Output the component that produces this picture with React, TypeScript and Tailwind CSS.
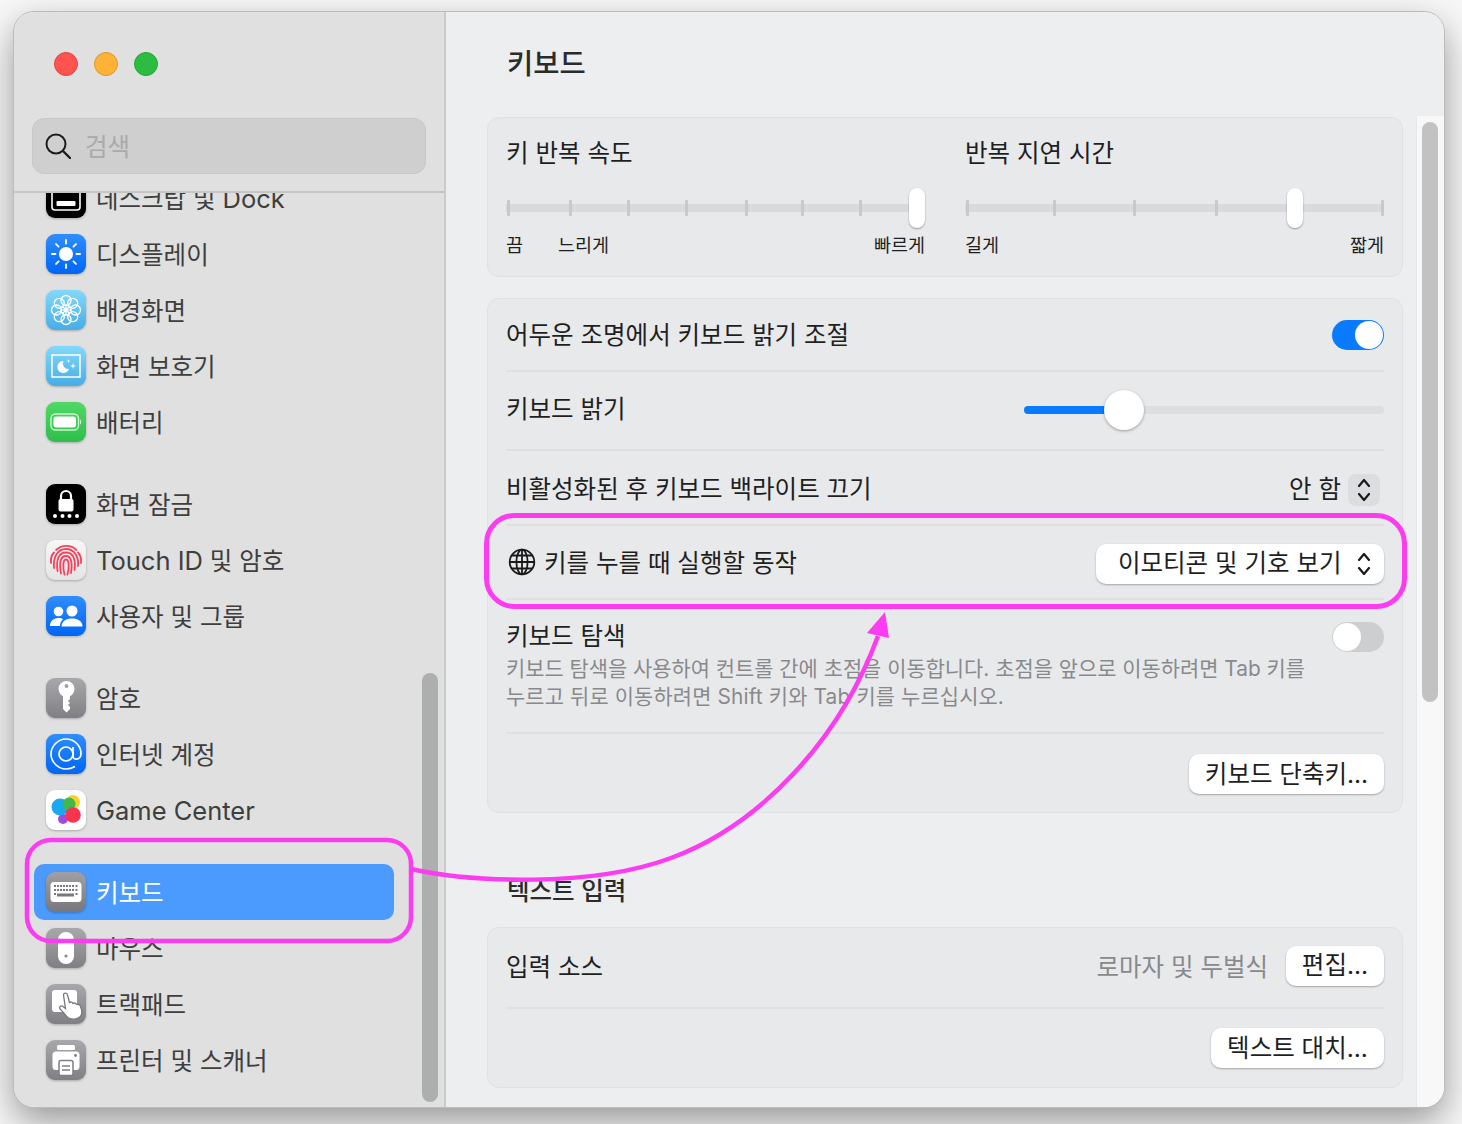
import React from "react";

const FONT = "font-['Inter','Noto_Sans_CJK_KR',sans-serif]";

function Tile({ id, from, to, children }: { id: string; from: string; to: string; children?: React.ReactNode }) {
  return (
    <svg width="40" height="40" viewBox="0 0 40 40" className="shrink-0 drop-shadow-[0_1px_1px_rgba(0,0,0,0.25)]">
      <defs>
        <linearGradient id={id} x1="0" y1="0" x2="0" y2="1">
          <stop offset="0" stopColor={from} />
          <stop offset="1" stopColor={to} />
        </linearGradient>
      </defs>
      <rect x="0" y="0" width="40" height="40" rx="9" fill={`url(#${id})`} />
      {children}
    </svg>
  );
}

const IconDock = () => (
  <Tile id="g-dock" from="#000" to="#000">
    <rect x="6" y="6" width="28" height="26" rx="3" fill="none" stroke="#fff" strokeWidth="1.6" />
    <rect x="10.5" y="23" width="19" height="5" rx="1" fill="#fff" />
  </Tile>
);

const IconDisplay = () => (
  <Tile id="g-disp" from="#2f8dfc" to="#0066f5">
    <circle cx="20" cy="20" r="7" fill="#fff" />
    {[0, 45, 90, 135, 180, 225, 270, 315].map((a) => (
      <rect key={a} x="19.1" y="5" width="1.8" height="5.4" rx="0.9" fill="#fff" transform={`rotate(${a} 20 20)`} />
    ))}
  </Tile>
);

const IconWallpaper = () => (
  <Tile id="g-wall" from="#83d8fb" to="#47ade6">
    {[0, 45, 90, 135, 180, 225, 270, 315].map((a) => (
      <g key={a} transform={`rotate(${a} 20 20)`}>
        <circle cx="20" cy="10.5" r="5" fill="none" stroke="#fff" strokeWidth="1.3" />
        <path d="M20 20 L20 14" stroke="#fff" strokeWidth="1.2" />
      </g>
    ))}
    <circle cx="20" cy="20" r="2" fill="#fff" />
  </Tile>
);

const IconSaver = () => (
  <Tile id="g-saver" from="#83d8fb" to="#47ade6">
    <rect x="6" y="9" width="28" height="22" fill="none" stroke="#fff" strokeWidth="1.5" />
    <path d="M17.5 15 A6 6 0 1 0 23 23 A5.5 5.5 0 0 1 17.5 15 Z" fill="#fff" />
    <path d="M27 17 L27.7 19.3 L30 20 L27.7 20.7 L27 23 L26.3 20.7 L24 20 L26.3 19.3 Z" fill="#fff" />
    <path d="M22.5 13 L23 14.5 L24.5 15 L23 15.5 L22.5 17 L22 15.5 L20.5 15 L22 14.5 Z" fill="#fff" />
  </Tile>
);

const IconBattery = () => (
  <Tile id="g-batt" from="#4fd964" to="#2fbf4a">
    <rect x="5" y="12" width="27.5" height="16" rx="4.5" fill="none" stroke="#fff" strokeOpacity="0.75" strokeWidth="1.4" />
    <rect x="7.5" y="14.5" width="22.5" height="11" rx="2.5" fill="#fff" />
    <path d="M34 17.5 C35.5 18 35.5 22 34 22.5 Z" fill="#fff" fillOpacity="0.8" />
  </Tile>
);

const IconLock = () => (
  <Tile id="g-lock" from="#000" to="#000">
    <path d="M15 16 V12 A5 5 0 0 1 25 12 V16" fill="none" stroke="#fff" strokeWidth="2.2" />
    <rect x="12.5" y="15" width="15" height="12.5" rx="2" fill="#fff" />
    {[9, 16.5, 23.5, 31].map((x) => (
      <circle key={x} cx={x} cy="32" r="2" fill="#fff" />
    ))}
  </Tile>
);

const IconTouch = () => (
  <Tile id="g-touch" from="#f7f7f7" to="#e4e4e4">
    <g fill="none" stroke="#f2445e" strokeWidth="1.8" strokeLinecap="round">
      <path d="M10 10 C16 4.5 25 4.5 30.5 10" />
      <path d="M5 23 C4.5 18 5.5 15 8 12.5" />
      <path d="M35 23 C35.5 18 34.5 15 32 12.5" />
      <path d="M8 28 C7 18 11 9 20 9 C29 9 33 18 32 26" />
      <path d="M11.5 31 C10 20 12.5 12.5 20 12.5 C27.5 12.5 30 20 28.5 30" />
      <path d="M15 33.5 C13 23 14.5 16 20 16 C25.5 16 26.5 23 25 33" />
      <path d="M18.5 34.5 C16.5 26 17 19.5 20 19.5 C23 19.5 23.5 26 21.5 34.5" />
    </g>
  </Tile>
);

const IconUsers = () => (
  <Tile id="g-users" from="#2f8dfc" to="#0066f5">
    <circle cx="12.5" cy="15.5" r="4.8" fill="#fff" />
    <path d="M4 30 C4 24.5 8.5 22 12.5 22 C14.5 22 16 22.5 17 23.3 C15 25 14 27.5 14 30 Z" fill="#fff" />
    <circle cx="26" cy="15" r="5.5" fill="#fff" />
    <path d="M15.5 30.5 C15.5 25 20.5 22.5 26 22.5 C31.5 22.5 36.5 25 36.5 30.5 Z" fill="#fff" />
  </Tile>
);

const IconKey = () => (
  <Tile id="g-key" from="#a8a8ac" to="#7f7f84">
    <path
      fillRule="evenodd"
      d="M20.5 3 A8 8 0 1 1 20.5 19 A8 8 0 1 1 20.5 3 Z M20.5 6 A2 2 0 1 0 20.5 10 A2 2 0 1 0 20.5 6 Z"
      fill="#fff"
    />
    <path d="M17 17 V31 L20.5 34.5 L24 31 V29 L22 27 L24 25 L22 23 L24 21 V17 Z" fill="#fff" />
  </Tile>
);

const IconAt = () => (
  <Tile id="g-at" from="#2f8dfc" to="#0066f5">
    <g fill="none" stroke="#fff" strokeWidth="1.7">
      <circle cx="20" cy="20" r="7" />
      <path d="M27 13 V22 C27 27 35 26 35 19.5 C35 11.5 28 5 20 5 C12 5 5 12 5 20 C5 28 12 35 20 35 C23.5 35 26.5 34 29 32.5" />
    </g>
  </Tile>
);

const IconGame = () => (
  <svg width="40" height="40" viewBox="0 0 40 40" className="shrink-0 drop-shadow-[0_1px_1px_rgba(0,0,0,0.25)]">
    <rect x="0" y="0" width="40" height="40" rx="9" fill="#fff" />
    <circle cx="17" cy="29" r="5" fill="#9a4be0" />
    <circle cx="27" cy="12" r="7" fill="#f8d22a" />
    <circle cx="14" cy="17" r="8.5" fill="#19a9ee" />
    <circle cx="23" cy="14" r="6.5" fill="#42b84a" />
    <circle cx="27" cy="25" r="7.8" fill="#f8344f" />
  </svg>
);

const IconKeyboard = () => (
  <Tile id="g-kb" from="#a0a0a4" to="#77777c">
    <rect x="4.5" y="10" width="31" height="20" rx="3.5" fill="#fff" />
    <g fill="#77777c">
      {[8, 11, 14, 17, 20, 23, 26, 29.5].map((x) => (
        <rect key={x} x={x} y="13" width="2" height="2" />
      ))}
      {[8, 11, 14, 17, 20, 23, 26, 29.5].map((x) => (
        <rect key={x} x={x} y="17" width="2" height="2" />
      ))}
      <rect x="8" y="21" width="2" height="2" />
      <rect x="29.5" y="21" width="2" height="2" />
      <rect x="11" y="21.5" width="17" height="3" />
    </g>
  </Tile>
);

const IconMouse = () => (
  <Tile id="g-mouse" from="#a8a8ac" to="#7f7f84">
    <rect x="12" y="4" width="16" height="32" rx="8" fill="#fff" />
    <circle cx="20" cy="28" r="1.6" fill="#8a8a8e" />
  </Tile>
);

const IconTrackpad = () => (
  <Tile id="g-tp" from="#a8a8ac" to="#7f7f84">
    <rect x="6" y="6" width="25" height="22" rx="3" fill="#fff" />
    <path
      d="M17.5 11 C17.5 8.5 21 8.5 21.5 11 L23.5 18.5 C25 17.5 26.5 18 27 19.5 C28.5 18.5 30 19 30.5 20.5 C32 20 34 20.5 34.5 22.5 C36 26 36.5 30 34.5 32.5 C32 35.5 26 36 22.5 34 C19.5 32 17 27.5 14 25 C12.5 23 15 21 17 22.5 L19.5 24.5 Z"
      fill="#fff"
      stroke="#77777c"
      strokeWidth="1.3"
    />
  </Tile>
);

const IconPrinter = () => (
  <Tile id="g-pr" from="#a8a8ac" to="#7f7f84">
    <rect x="11" y="5" width="18" height="5" rx="1.5" fill="#fff" />
    <rect x="6.5" y="11.5" width="27" height="18.5" rx="3.5" fill="#fff" />
    <circle cx="29.5" cy="15.5" r="1.4" fill="#7f7f84" />
    <rect x="13" y="20.5" width="14" height="15" rx="2" fill="#fff" stroke="#7f7f84" strokeWidth="1.5" />
    <path d="M16 26 H24 M16 30 H24" stroke="#7f7f84" strokeWidth="1.3" />
  </Tile>
);

const Lat = ({ children }: { children: React.ReactNode }) => <span className="text-[25.5px]">{children}</span>;

function Row({ icon, label, active }: { icon: React.ReactNode; label: React.ReactNode; active?: boolean }) {
  return (
    <div className={`flex h-[56px] w-[360px] items-center gap-[10px] rounded-[10px] pl-[12px] text-[24.5px] ${active ? "bg-[#4b9bff] text-white" : "text-[#3e3e3e]"}`}>
      {icon}
      <span className="whitespace-nowrap pt-[2px] leading-none">{label}</span>
    </div>
  );
}

function Sidebar() {
  return (
    <aside className="relative flex h-full w-[432px] shrink-0 flex-col border-r-2 border-[#c9caca] bg-[#dfe0df]">
      <div className="flex h-[181px] shrink-0 flex-col border-b-2 border-[#c4c5c5]">
        <div className="flex gap-[16px] pl-[40px] pt-[40px]">
          <span className="h-[24px] w-[24px] rounded-full border border-[#e0443e] bg-[#ff5350]" />
          <span className="h-[24px] w-[24px] rounded-full border border-[#dc9a2a] bg-[#ffb236]" />
          <span className="h-[24px] w-[24px] rounded-full border border-[#22a834] bg-[#2bbc41]" />
        </div>
        <div className="ml-[18px] mt-[42px] flex h-[56px] w-[394px] items-center gap-[14px] rounded-[12px] border border-[#c6c7c7] bg-[#cecfce] pl-[12px]">
          <svg width="26" height="26" viewBox="0 0 26 26" fill="none" stroke="#1c1c1c" strokeWidth="2">
            <circle cx="11" cy="11" r="9.5" />
            <path d="M18 18 L25 25" strokeLinecap="round" strokeWidth="2.4" />
          </svg>
          <span className="pt-[2px] text-[24.5px] leading-none text-[#a9aaaa]">검색</span>
        </div>
      </div>
      <div className="flex-1 overflow-hidden px-[20px]">
        <div className="-mt-[23px] flex flex-col">
          <Row icon={<IconDock />} label={<>데스크탑 및 <Lat>Dock</Lat></>} />
          <Row icon={<IconDisplay />} label="디스플레이" />
          <Row icon={<IconWallpaper />} label="배경화면" />
          <Row icon={<IconSaver />} label="화면 보호기" />
          <Row icon={<IconBattery />} label="배터리" />
          <div className="h-[26px]" />
          <Row icon={<IconLock />} label="화면 잠금" />
          <Row icon={<IconTouch />} label={<><Lat>Touch ID</Lat> 및 암호</>} />
          <Row icon={<IconUsers />} label="사용자 및 그룹" />
          <div className="h-[26px]" />
          <Row icon={<IconKey />} label="암호" />
          <Row icon={<IconAt />} label="인터넷 계정" />
          <Row icon={<IconGame />} label={<Lat>Game Center</Lat>} />
          <div className="h-[26px]" />
          <Row icon={<IconKeyboard />} label="키보드" active />
          <Row icon={<IconMouse />} label="마우스" />
          <Row icon={<IconTrackpad />} label="트랙패드" />
          <Row icon={<IconPrinter />} label="프린터 및 스캐너" />
        </div>
      </div>
      <div className="absolute left-[408px] top-[661px] h-[429px] w-[16px] rounded-full bg-[#adaeae]" />
    </aside>
  );
}

function Divider() {
  return <div className="h-[2px] shrink-0 bg-[#dfe0e2]" />;
}

function TickSlider({ ticks, thumb }: { ticks: number[]; thumb: number }) {
  return (
    <div className="relative h-[40px] w-full">
      <div className="absolute left-0 right-0 top-[16px] h-[8px] bg-[#d9dadc]" />
      {ticks.map((t) => (
        <div key={t} className="absolute top-[12px] h-[16px] w-[3px] rounded-[1px] bg-[#c8c9cb]" style={{ left: t }} />
      ))}
      <div className="absolute top-0 h-[40px] w-[16px] rounded-full bg-white shadow-[0_1px_2px_rgba(0,0,0,0.35)]" style={{ left: thumb }} />
    </div>
  );
}

function Stepper() {
  return (
    <svg width="16" height="26" viewBox="0 0 16 26" fill="none" stroke="#1a1a1a" strokeWidth="2.2" strokeLinecap="round" strokeLinejoin="round">
      <path d="M3 9 L8 3 L13 9" />
      <path d="M3 17 L8 23 L13 17" />
    </svg>
  );
}

function Btn({ label, w }: { label: string; w: string }) {
  return (
    <div className={`flex h-[40px] items-center justify-center rounded-[10px] bg-white text-[24.5px] leading-none text-[#1f1f1f] shadow-[0_1px_2px_rgba(0,0,0,0.3)] ${w}`}>
      {label}
    </div>
  );
}

function Card({ children }: { children: React.ReactNode }) {
  return <section className="rounded-[12px] border border-[#e0e1e3] bg-[#e8e9eb] px-[18px]">{children}</section>;
}

function Main() {
  return (
    <main className="relative h-full flex-1 overflow-hidden bg-[#eceef0]">
      <div className="pointer-events-none absolute bottom-0 right-0 top-[104px] w-[28px] border-l border-[#e6e7e9] bg-[#f8f8f9]">
        <div className="ml-[5px] mt-[6px] h-[580px] w-[16px] rounded-full bg-[#c2c2c3]" />
      </div>
      <h1 className="flex h-[105px] items-start pl-[61px] pt-[32px] text-[28.5px] font-medium leading-[40px] text-[#2b2b2b]">키보드</h1>
      <div className="ml-[41px] w-[916px] text-[24.5px] text-[#1f1f1f]">
        <Card>
          <div className="grid h-[158px] grid-cols-[419px_419px] gap-x-[40px]">
            <div>
              <div className="pt-[17px] leading-[36px]">키 반복 속도</div>
              <div className="mt-[17px]">
                <TickSlider ticks={[1, 63, 121, 179, 239, 295, 353]} thumb={403} />
              </div>
              <div className="mt-[3px] flex text-[18.5px] leading-[28px]">
                <span>끔</span>
                <span className="ml-[35px]">느리게</span>
                <span className="ml-auto">빠르게</span>
              </div>
            </div>
            <div>
              <div className="pt-[17px] leading-[36px]">반복 지연 시간</div>
              <div className="mt-[17px]">
                <TickSlider ticks={[1, 88, 168, 250, 416]} thumb={322} />
              </div>
              <div className="mt-[3px] flex justify-between text-[18.5px] leading-[28px]">
                <span>길게</span>
                <span>짧게</span>
              </div>
            </div>
          </div>
        </Card>

        <div className="mt-[21px]">
          <Card>
            <div className="flex h-[71px] items-center justify-between">
              <span className="pt-[2px]">어두운 조명에서 키보드 밝기 조절</span>
              <div className="flex h-[30px] w-[52px] items-center justify-end rounded-full bg-[#0a7bff] pr-[1px]">
                <div className="h-[28px] w-[28px] rounded-full bg-white" />
              </div>
            </div>
            <Divider />
            <div className="flex h-[77px] items-center justify-between">
              <span className="-mt-[2px]">키보드 밝기</span>
              <div className="relative mb-[2px] h-[40px] w-[360px]">
                <div className="absolute left-0 right-0 top-[16px] h-[8px] rounded-full bg-[#dddee0]" />
                <div className="absolute left-0 top-[16px] h-[8px] w-[100px] rounded-full bg-[#0a7bff]" />
                <div className="absolute left-[80px] top-0 h-[40px] w-[40px] rounded-full bg-white shadow-[0_1px_3px_rgba(0,0,0,0.35)]" />
              </div>
            </div>
            <Divider />
            <div className="flex h-[73px] items-center justify-between">
              <span className="pt-[4px]">비활성화된 후 키보드 백라이트 끄기</span>
              <div className="flex items-center gap-[7px] pr-[4px] pt-[4px]">
                <span>안 함</span>
                <div className="flex h-[32px] w-[32px] items-center justify-center rounded-[8px] bg-[#dcdde0]">
                  <Stepper />
                </div>
              </div>
            </div>
            <Divider />
            <div className="flex h-[72px] items-center justify-between">
              <div className="flex items-center gap-[8px]">
                <svg width="28" height="28" viewBox="0 0 28 28" className="ml-[2px]" fill="none" stroke="#1a1a1a" strokeWidth="1.8">
                  <circle cx="14" cy="14" r="12.3" />
                  <ellipse cx="14" cy="14" rx="5.6" ry="12.3" />
                  <path d="M14 1.7 V26.3 M1.7 14 H26.3 M3.5 7.5 H24.5 M3.5 20.5 H24.5" />
                </svg>
                <span className="pt-[2px]">키를 누를 때 실행할 동작</span>
              </div>
              <div className="mt-[4px] flex h-[40px] w-[288px] items-center justify-between rounded-[10px] bg-white pl-[22px] pr-[12px] shadow-[0_1px_2px_rgba(0,0,0,0.3)]">
                <span className="-mt-[2px]">이모티콘 및 기호 보기</span>
                <Stepper />
              </div>
            </div>
            <Divider />
            <div className="h-[132px] pt-[18px]">
              <div className="flex items-start justify-between">
                <span className="leading-[36px]">키보드 탐색</span>
                <div className="mt-[4px] flex h-[30px] w-[52px] items-center rounded-full bg-[#cdcecf] pl-[1px]">
                  <div className="h-[28px] w-[28px] rounded-full bg-white" />
                </div>
              </div>
              <p className="whitespace-nowrap pt-[1px] text-[20.9px] leading-[28px] text-[#88898b]">
                키보드 탐색을 사용하여 컨트롤 간에 초점을 이동합니다. 초점을 앞으로 이동하려면 Tab 키를
                <br />
                <span className="tracking-[0.13px]">누르고 뒤로 이동하려면 Shift 키와 Tab 키를 누르십시오.</span>
              </p>
            </div>
            <Divider />
            <div className="flex h-[78px] items-center justify-end pt-[2px]">
              <Btn label="키보드 단축키..." w="w-[195px]" />
            </div>
          </Card>
        </div>

        <h2 className="ml-[20px] mb-[18px] mt-[58px] h-[38px] pt-[2px] text-[24.5px] font-medium leading-[36px] text-[#2b2b2b]">텍스트 입력</h2>

        <Card>
          <div className="flex h-[79px] items-center justify-between pb-[4px]">
            <span className="pt-[4px]">입력 소스</span>
            <div className="flex items-center gap-[18px]">
              <span className="pt-[4px] text-[#88898b]">로마자 및 두벌식</span>
              <Btn label="편집..." w="w-[98px]" />
            </div>
          </div>
          <Divider />
          <div className="flex h-[78px] items-center justify-end">
            <Btn label="텍스트 대치..." w="w-[173px]" />
          </div>
        </Card>
      </div>
    </main>
  );
}

function Annotations() {
  return (
    <svg className="pointer-events-none absolute left-0 top-0" width="1462" height="1124" viewBox="0 0 1462 1124" fill="none">
      <g stroke="#fb3cf0">
        <rect x="27" y="840" width="384" height="101" rx="24" strokeWidth="4.5" />
        <rect x="486.5" y="515.5" width="918" height="91" rx="28" strokeWidth="5" />
        <path d="M411 869 C470 882 590 888 671 858 C760 825 840 740 878 636" strokeWidth="4.5" />
      </g>
      <path d="M885 612 L867 633 L889 638 Z" fill="#fb3cf0" />
    </svg>
  );
}

export default function App() {
  return (
    <div className={`relative h-[1124px] w-[1462px] overflow-hidden bg-[#f7f7f7] ${FONT}`}>
      <div className="absolute bottom-[17px] left-[14px] top-[12px] w-[1430px] rounded-[20px] shadow-[0_14px_36px_rgba(0,0,0,0.4)]" />
      <div className="relative ml-[14px] mt-[12px] inline-flex h-[1095px] w-[1430px] overflow-hidden rounded-[20px] outline outline-1 outline-[#bcbcbc]">
        <Sidebar />
        <Main />
      </div>
      <Annotations />
    </div>
  );
}
